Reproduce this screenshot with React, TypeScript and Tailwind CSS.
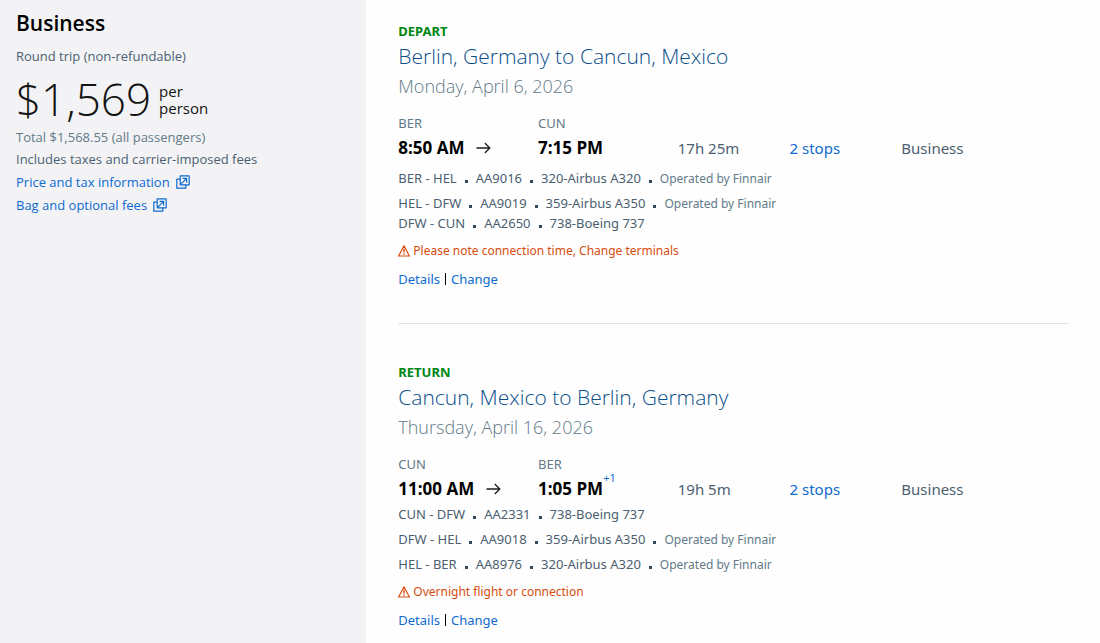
import { Fragment } from 'react';

type Segment = {
  route: string;
  flight: string;
  aircraft: string;
  operator?: string;
};

type Slice = {
  label: string;
  title: string;
  date: string;
  from: string;
  departs: string;
  to: string;
  arrives: string;
  dayOffset?: string;
  duration: string;
  stops: string;
  cabin: string;
  segments: Segment[];
  warning: string;
};

const slices: Slice[] = [
  {
    label: 'DEPART',
    title: 'Berlin, Germany to Cancun, Mexico',
    date: 'Monday, April 6, 2026',
    from: 'BER',
    departs: '8:50 AM',
    to: 'CUN',
    arrives: '7:15 PM',
    duration: '17h 25m',
    stops: '2 stops',
    cabin: 'Business',
    segments: [
      { route: 'BER - HEL', flight: 'AA9016', aircraft: '320-Airbus A320', operator: 'Operated by Finnair' },
      { route: 'HEL - DFW', flight: 'AA9019', aircraft: '359-Airbus A350', operator: 'Operated by Finnair' },
      { route: 'DFW - CUN', flight: 'AA2650', aircraft: '738-Boeing 737' },
    ],
    warning: 'Please note connection time, Change terminals',
  },
  {
    label: 'RETURN',
    title: 'Cancun, Mexico to Berlin, Germany',
    date: 'Thursday, April 16, 2026',
    from: 'CUN',
    departs: '11:00 AM',
    to: 'BER',
    arrives: '1:05 PM',
    dayOffset: '+1',
    duration: '19h 5m',
    stops: '2 stops',
    cabin: 'Business',
    segments: [
      { route: 'CUN - DFW', flight: 'AA2331', aircraft: '738-Boeing 737' },
      { route: 'DFW - HEL', flight: 'AA9018', aircraft: '359-Airbus A350', operator: 'Operated by Finnair' },
      { route: 'HEL - BER', flight: 'AA8976', aircraft: '320-Airbus A320', operator: 'Operated by Finnair' },
    ],
    warning: 'Overnight flight or connection',
  },
];

function NewWindowIcon() {
  return (
    <svg className="h-[14px] w-[14px]" viewBox="0 0 14 14" fill="none" stroke="currentColor" strokeWidth="1.2" strokeLinejoin="round" aria-hidden="true">
      <path d="M4.2 0.8h9v9h-9z" />
      <path d="M4.2 4.2H0.8v9h9V9.8" />
      <path d="M4.4 9.6 10.6 3.4M6.6 3.4h4v4" />
    </svg>
  );
}

function ArrowIcon() {
  return (
    <svg className="h-3 w-[15px]" viewBox="0 0 15 12" fill="none" stroke="#1c1c1c" strokeWidth="1.3" aria-hidden="true">
      <path d="M0.5 6h13.3M8.8 1l5 5-5 5" />
    </svg>
  );
}

function WarningIcon() {
  return (
    <svg className="h-3 w-3" viewBox="0 0 12 12" fill="none" stroke="currentColor" strokeWidth="1.2" strokeLinejoin="round" aria-hidden="true">
      <path d="M6 0.8 11.4 11H0.6z" />
      <path d="M6 3.8v3.8M6 8.4v1.3" strokeWidth="1.4" />
    </svg>
  );
}

function FareSummary() {
  return (
    <aside className="w-[33.3%] shrink-0 bg-[#f3f3f6] px-4 pt-2 font-['Open_Sans',sans-serif] text-[#4b5f70]">
      <h2 className="text-[21px] leading-[30px] font-semibold text-black">Business</h2>
      <p className="mt-2 text-[13px] leading-5">Round trip (non-refundable)</p>
      <div className="mt-[7px] flex items-center gap-2 text-[#131313]">
        <span className="text-[44px] leading-[52px] font-light">$1,569</span>
        <span className="pt-px text-[15px] leading-[17px]">
          per
          <br />
          person
        </span>
      </div>
      <p className="mt-[2px] text-[13px] leading-5 text-[#627a88]">Total $1,568.55 (all passengers)</p>
      <p className="mt-[2px] text-[13px] leading-5">Includes taxes and carrier-imposed fees</p>
      <ul className="mt-[3px] flex flex-col gap-[3px] text-[13px] leading-5 text-[#0f6ad0]">
        <li>
          <a href="#price" className="flex w-fit items-center gap-[6px]">
            Price and tax information
            <NewWindowIcon />
          </a>
        </li>
        <li>
          <a href="#bags" className="flex w-fit items-center gap-[6px]">
            Bag and optional fees
            <NewWindowIcon />
          </a>
        </li>
      </ul>
    </aside>
  );
}

function Dot() {
  return <span className="mx-2 h-[3px] w-[3px] bg-[#36495a]" />;
}

function SegmentRow({ segment }: { segment: Segment }) {
  const parts = [segment.route, segment.flight, segment.aircraft];

  return (
    <li className={segment.operator ? 'flex items-baseline pt-[5px]' : 'flex items-baseline'}>
      {parts.map((part, i) => (
        <Fragment key={part}>
          {i > 0 && <Dot />}
          <span>{part}</span>
        </Fragment>
      ))}
      {segment.operator && (
        <>
          <Dot />
          <span className="text-xs text-[#627a88]">{segment.operator}</span>
        </>
      )}
    </li>
  );
}

function FlightSlice({ slice }: { slice: Slice }) {
  return (
    <section>
      <h3 className="text-[13px] leading-5 font-bold text-[#008712]">{slice.label}</h3>
      <h2 className="font-['Open_Sans',sans-serif] text-[21px] leading-[30px] font-light text-[#0b4f8a]">{slice.title}</h2>
      <p className="mt-[3px] font-['Open_Sans',sans-serif] text-lg leading-6 font-light text-[#627a88]">{slice.date}</p>

      <div className="mt-[15px] grid grid-cols-[5fr_5fr_4fr_4fr_6fr] items-end text-[#4b5f70]">
        <div>
          <div className="text-[13px] leading-5 text-[#627a88]">{slice.from}</div>
          <div className="flex items-center gap-3">
            <span className="font-['Open_Sans',sans-serif] text-[17px] leading-[30px] font-bold text-black">{slice.departs}</span>
            <ArrowIcon />
          </div>
        </div>
        <div>
          <div className="text-[13px] leading-5 text-[#627a88]">{slice.to}</div>
          <div className="flex items-start">
            <span className="font-['Open_Sans',sans-serif] text-[17px] leading-[30px] font-bold text-black">{slice.arrives}</span>
            {slice.dayOffset && <span className="text-[11px] leading-[7px] text-[#0f6ad0]">{slice.dayOffset}</span>}
          </div>
        </div>
        <div className="text-[15px] leading-[30px]">{slice.duration}</div>
        <div className="text-[15px] leading-[30px]">
          <a href="#stops" className="text-[#0f6ad0]">{slice.stops}</a>
        </div>
        <div className="text-[15px] leading-[30px]">{slice.cabin}</div>
      </div>

      <ul className="text-[13px] leading-5 text-[#4b5f70]">
        {slice.segments.map((segment) => (
          <SegmentRow key={segment.flight} segment={segment} />
        ))}
      </ul>

      <p className="mt-2 flex items-center gap-[3px] text-xs leading-5 text-[#d64c0f]">
        <WarningIcon />
        {slice.warning}
      </p>

      <div className="mt-2 flex items-center text-[13px] leading-5 text-[#0f6ad0]">
        <a href="#details">Details</a>
        <span className="mx-[5px] h-3 w-px bg-black" />
        <a href="#change">Change</a>
      </div>
    </section>
  );
}

export default function App() {
  return (
    <div className="flex min-h-screen bg-[#fefefe] font-['Noto_Sans',sans-serif]">
      <FareSummary />
      <main className="grow pt-[21px] pr-[31px] pl-8">
        <FlightSlice slice={slices[0]} />
        <hr className="mt-[34px] mb-[38px] border-[#e2e2e4]" />
        <FlightSlice slice={slices[1]} />
      </main>
    </div>
  );
}
